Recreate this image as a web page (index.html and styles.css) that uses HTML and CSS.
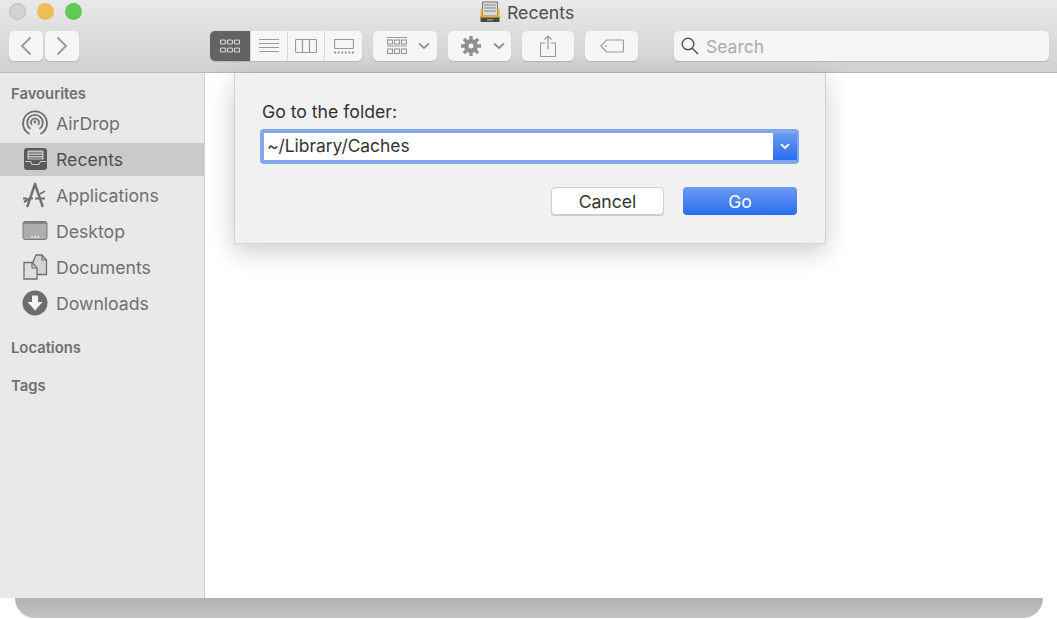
FILE: index.html
```html
<!DOCTYPE html>
<html lang="en">
<head>
    <meta charset="UTF-8">
    <title>Recents</title>
    <link rel="stylesheet" href="styles.css">
</head>
<body>
    <div class="window">
        <header class="toolbar">
            <div class="lights">
                <span class="light light-off"></span>
                <span class="light light-min"></span>
                <span class="light light-max"></span>
            </div>
            <div class="title">
                <svg class="title-icon" width="22" height="22" viewBox="0 0 22 22">
                    <rect x="3.500" y="1" width="15" height="14" fill="#d8d8d8" stroke="#777"/>
                    <path d="M5 4h12M5 7h12M5 10h12" stroke="#8a8a8a"/>
                    <path d="M2.500 8v7M19.500 8v7" stroke="#e9b52f" stroke-width="2"/>
                    <path d="M1.500 15h19v5a1 1 0 0 1-1 1h-17a1 1 0 0 1-1-1z" fill="#4a4a4a"/>
                    <rect x="1.500" y="14.500" width="19" height="2" fill="#e9b52f"/>
                    <rect x="8" y="18" width="6" height="1.500" fill="#999"/>
                </svg>
                <span>Recents</span>
            </div>
            <div class="tools">
                <div class="group nav-group">
                    <button class="tool nav-btn">
                        <svg width="12" height="20" viewBox="0 0 12 20"><path d="M10.500 1.500 2 10l8.500 8.500" class="line"/></svg>
                    </button>
                    <button class="tool nav-btn">
                        <svg width="12" height="20" viewBox="0 0 12 20"><path d="M1.500 1.500 10 10l-8.500 8.500" class="line"/></svg>
                    </button>
                </div>
                <div class="group views">
                    <button class="view view-on">
                        <svg width="20" height="14" viewBox="0 0 20 14" class="grid-on">
                            <rect x="0.500" y="1" width="5" height="4" rx="1"/><rect x="7.500" y="1" width="5" height="4" rx="1"/><rect x="14.500" y="1" width="5" height="4" rx="1"/>
                            <rect x="0.500" y="9" width="5" height="4" rx="1"/><rect x="7.500" y="9" width="5" height="4" rx="1"/><rect x="14.500" y="9" width="5" height="4" rx="1"/>
                        </svg>
                    </button>
                    <button class="view view-list">
                        <svg width="20" height="14" viewBox="0 0 20 14"><path d="M0 .5h20M0 4.500h20M0 8.500h20M0 12.500h20" class="thin"/></svg>
                    </button>
                    <button class="view view-cols">
                        <svg width="22" height="14" viewBox="0 0 22 14"><rect x=".5" y=".5" width="21" height="13" rx="1" class="thin"/><path d="M7.500 .5v13M14.500 .5v13" class="thin"/></svg>
                    </button>
                    <button class="view view-gallery">
                        <svg width="20" height="15" viewBox="0 0 20 15"><rect x=".5" y=".5" width="19" height="9" rx="1" class="thin"/><path d="M0 13.500h20" stroke="#9a9a9a" stroke-width="2" stroke-dasharray="2 1.600"/></svg>
                    </button>
                </div>
                <button class="tool arrange">
                    <svg width="20" height="18" viewBox="0 0 20 18">
                        <path d="M0 .5h20M0 9h20" class="thin"/>
                        <g class="thin"><rect x=".5" y="3" width="5" height="4"/><rect x="7.500" y="3" width="5" height="4"/><rect x="14.500" y="3" width="5" height="4"/>
                        <rect x=".5" y="12" width="5" height="4.500"/><rect x="7.500" y="12" width="5" height="4.500"/><rect x="14.500" y="12" width="5" height="4.500"/></g>
                    </svg>
                    <svg width="12" height="8" viewBox="0 0 12 8"><path d="M1 1.500 6 6l5-4.500" class="chev"/></svg>
                </button>
                <button class="tool action">
                    <svg width="20" height="20" viewBox="0 0 20 20">
                        <circle cx="10" cy="10" r="4.700" fill="none" stroke="#8f8f8f" stroke-width="4.400"/>
                        <path d="M10 0v4M10 16v4M0 10h4M16 10h4M2.900 2.900l2.900 2.900M14.200 14.200l2.900 2.900M2.900 17.100l2.900-2.900M14.200 5.800l2.900-2.900" stroke="#8f8f8f" stroke-width="3.400"/>
                    </svg>
                    <svg width="12" height="8" viewBox="0 0 12 8"><path d="M1 1.500 6 6l5-4.500" class="chev"/></svg>
                </button>
                <button class="tool share">
                    <svg width="16" height="22" viewBox="0 0 16 22"><path d="M5 8H.5v13.500h15V8H11M8 14V1M4.500 4.500 8 1l3.500 3.500" class="thin"/></svg>
                </button>
                <button class="tool tag">
                    <svg width="24" height="14" viewBox="0 0 24 14"><path d="M6.500 1H22a1.500 1.500 0 0 1 1.500 1.500v9A1.500 1.500 0 0 1 22 13H6.500L.8 7z" class="thin"/><circle cx="6" cy="7" r="1" fill="#9a9a9a"/></svg>
                </button>
                <label class="search">
                    <svg width="18" height="18" viewBox="0 0 18 18"><circle cx="7" cy="7" r="5.800" fill="none" stroke="#555" stroke-width="1.400"/><path d="m11.200 11.200 5.800 5.800" stroke="#555" stroke-width="1.500"/></svg>
                    <span>Search</span>
                </label>
            </div>
        </header>

        <div class="main">
            <aside class="sidebar">
                <h2 class="side-head side-head-fav">Favourites</h2>
                <a class="side-item">
                    <svg width="26" height="26" viewBox="0 0 26 26" class="side-icon">
                        <g fill="none" stroke="#6f6f6f">
                            <path d="M7.500 24a12 12 0 1 1 11 0" stroke-width="1.800"/>
                            <path d="M8.500 19a7.800 7.800 0 1 1 9 0" stroke-width="1.800"/>
                            <path d="M10 15a3.900 3.900 0 1 1 6 0" stroke-width="1.600"/>
                        </g>
                        <circle cx="13" cy="12" r="1.400" fill="#6f6f6f"/>
                    </svg>
                    AirDrop
                </a>
                <a class="side-item side-item-on">
                    <svg width="26" height="26" viewBox="0 0 26 26" class="side-icon">
                        <rect x="2" y="1" width="23" height="22" rx="3" fill="#5a5a5a"/>
                        <path d="M5.500 12.500V4.500a1 1 0 0 1 1-1h14a1 1 0 0 1 1 1v8z" fill="#c4c4c4"/>
                        <path d="M7 6h13M7 8.500h13M7 11h13" stroke="#5a5a5a" stroke-width="1.100"/>
                        <path d="M3 14.500h5.500l1.500 3h7l1.500-3H24" fill="none" stroke="#c4c4c4" stroke-width="1.200"/>
                    </svg>
                    Recents
                </a>
                <a class="side-item">
                    <svg width="26" height="26" viewBox="0 0 26 26" class="side-icon">
                        <g stroke="#6f6f6f" fill="none">
                            <path d="M13 2 5.500 24" stroke-width="2.400" stroke-linecap="round"/>
                            <path d="M13 2l7.500 22" stroke-width="2.400" stroke-linecap="round"/>
                            <path d="M1 16.500h24" stroke-width="1.800" stroke-dasharray="4 2"/>
                            <path d="M8.500 16 2 20" stroke-width="2.200"/>
                            <path d="m18 12 5-3" stroke-width="1.500"/>
                        </g>
                    </svg>
                    Applications
                </a>
                <a class="side-item">
                    <svg width="26" height="26" viewBox="0 0 26 26" class="side-icon">
                        <rect x="1" y="3.500" width="24" height="18" rx="2" fill="#aeaeae" stroke="#7a7a7a"/>
                        <rect x="1.500" y="4" width="23" height="2" fill="#858585"/>
                        <path d="M9 19h8" stroke="#eee" stroke-width="1.500" stroke-dasharray="2 1"/>
                    </svg>
                    Desktop
                </a>
                <a class="side-item">
                    <svg width="26" height="26" viewBox="0 0 26 26" class="side-icon">
                        <path d="M14 1h6l4.500 5v14.500H11V8z" fill="#d4d4d4" stroke="#6f6f6f" stroke-width="1.300"/>
                        <path d="M20 1v5h4.500" fill="none" stroke="#6f6f6f" stroke-width="1.200"/>
                        <path d="M2 8.500h8L15 14v11H2z" fill="#dedede" stroke="#6f6f6f" stroke-width="1.300"/>
                        <path d="M10 8.500V14h5" fill="none" stroke="#6f6f6f" stroke-width="1.200"/>
                    </svg>
                    Documents
                </a>
                <a class="side-item">
                    <svg width="26" height="26" viewBox="0 0 26 26" class="side-icon">
                        <circle cx="13" cy="13" r="12.500" fill="#6d6d6d"/>
                        <path d="M10 5.500h6V12h4.500L13 20.500 5.500 12H10z" fill="#f2f2f2"/>
                    </svg>
                    Downloads
                </a>
                <h2 class="side-head side-head-loc">Locations</h2>
                <h2 class="side-head side-head-tags">Tags</h2>
            </aside>
            <section class="content">
                <form class="sheet">
                    <label class="sheet-label">Go to the folder:</label>
                    <div class="combo">
                        <span class="combo-text">~/Library/Caches</span>
                        <span class="combo-arrow">
                            <svg width="10" height="7" viewBox="0 0 10 7"><path d="M1 1.200 5 5l4-3.800" fill="none" stroke="#fff" stroke-width="1.800"/></svg>
                        </span>
                    </div>
                    <div class="sheet-buttons">
                        <button type="button" class="btn btn-cancel">Cancel</button>
                        <button type="button" class="btn btn-go">Go</button>
                    </div>
                </form>
            </section>
        </div>
    </div>
    <div class="under-shadow"></div>
</body>
</html>
```

FILE: styles.css
```css
* {
    box-sizing: border-box;
}

html, body {
    margin: 0;
    height: 619px;
    overflow: hidden;
    background-color: #ffffff;
    font-family: Inter, "Liberation Sans", sans-serif;
}

.window {
    height: 598px;
    display: flex;
    flex-direction: column;
    border-bottom-left-radius: 3px;
    border-bottom-right-radius: 3px;
    overflow: hidden;
}

.toolbar {
    height: 73px;
    flex: none;
    background: linear-gradient(#e9e9e9, #d0d0d0);
    border-bottom: 1px solid #b8b8b8;
    display: flex;
    flex-direction: column;
    position: relative;
}

.lights {
    position: absolute;
    left: 9px;
    top: 3px;
    display: flex;
    gap: 11px;
}

.light {
    width: 17px;
    height: 17px;
    border-radius: 50%;
}

.light-off {
    background-color: #d2d2d2;
    border: 1px solid #bdbdbd;
}

.light-min {
    background-color: #f0bc55;
}

.light-max {
    background-color: #62c955;
}

.title {
    height: 31px;
    padding: 2px 0 0 479px;
    display: flex;
    gap: 6px;
    font-size: 17.700px;
    color: #4f4f4f;
    line-height: 22px;
}

.title-icon {
    flex: none;
    margin-top: -1px;
}

.tools {
    height: 30px;
    padding: 0 8px 0 9px;
    display: flex;
}

.tool, .view {
    border: 0;
    padding: 0;
    background-color: #f6f6f6;
    display: flex;
    align-items: center;
    justify-content: center;
}

.tool {
    height: 30px;
    border-radius: 5px;
    box-shadow: 0 1px 1px #b5b5b5;
}

.line {
    fill: none;
    stroke: #9c9c9c;
    stroke-width: 2;
}

.thin {
    fill: none;
    stroke: #9a9a9a;
    stroke-width: 1.200;
}

.chev {
    fill: none;
    stroke: #8f8f8f;
    stroke-width: 1.800;
}

.group {
    display: flex;
}

.nav-group {
    gap: 2px;
}

.nav-btn {
    width: 34px;
}

.views {
    margin-left: 131px;
    border-radius: 5px;
    overflow: hidden;
    box-shadow: 0 1px 1px #b5b5b5;
    gap: 1px;
    background-color: #d9d9d9;
}

.view {
    height: 30px;
}

.view-on {
    width: 40px;
    background-color: #636363;
}

.grid-on rect {
    fill: none;
    stroke: #d6d6d6;
    stroke-width: 1.200;
}

.view-list {
    width: 36px;
}

.view-cols {
    width: 36px;
}

.view-gallery {
    width: 37px;
}

.arrange {
    width: 64px;
    margin-left: 11px;
    padding-left: 6px;
    gap: 11px;
}

.action {
    width: 63px;
    margin-left: 11px;
    padding-left: 7px;
    gap: 12px;
}

.share {
    width: 52px;
    margin-left: 11px;
}

.tag {
    width: 53px;
    margin-left: 11px;
}

.search {
    width: 375px;
    height: 30px;
    margin-left: 36px;
    padding-left: 7px;
    border-radius: 5px;
    background-color: #f6f6f6;
    box-shadow: 0 1px 1px #b5b5b5;
    display: flex;
    align-items: center;
    gap: 7px;
    font-size: 17.500px;
    color: #ababab;
}

.main {
    flex: 1;
    display: flex;
    min-height: 0;
}

.sidebar {
    width: 205px;
    flex: none;
    background-color: #e9e9e9;
    border-right: 1px solid #d2d2d2;
    padding-top: 11px;
}

.side-head {
    margin: 0;
    padding-left: 11px;
    font-size: 14.800px;
    font-weight: 600;
    line-height: 20px;
    color: #707070;
}

.side-head-fav {
    margin-bottom: 1px;
}

.side-head-loc {
    margin-top: 17px;
}

.side-head-tags {
    margin-top: 18px;
}

.side-item {
    height: 36px;
    display: flex;
    align-items: center;
    gap: 8px;
    padding-left: 22px;
    font-size: 17.650px;
    color: #707070;
}

.side-item-on {
    background-color: #cacaca;
    background-clip: padding-box;
    border-top: 2px solid transparent;
    border-bottom: 1px solid transparent;
    color: #505050;
}

.side-icon {
    flex: none;
}

.content {
    flex: 1;
    background-color: #ffffff;
    position: relative;
}

.sheet {
    position: absolute;
    left: 29px;
    top: 0;
    width: 592px;
    height: 171px;
    padding: 28px 28px 0 27px;
    background-color: #f1f1f1;
    border: 1px solid #d2d2d2;
    border-top: 0;
    box-shadow: 0 8px 24px rgba(0, 0, 0, 0.2);
}

.sheet-label {
    display: block;
    font-size: 17.650px;
    line-height: 22px;
    color: #333333;
}

.combo {
    width: 539px;
    height: 35px;
    margin: 6px 0 0 -2px;
    display: flex;
    background-color: #ffffff;
    border: 4px solid #80a6ec;
    border-right-width: 2px;
    border-radius: 4px;
}

.combo-text {
    flex: 1;
    padding-left: 3px;
    font-size: 17.400px;
    line-height: 26px;
    color: #333333;
}

.combo-arrow {
    width: 24px;
    background: linear-gradient(#6a9bf1, #2b6ef0);
    display: flex;
    align-items: center;
    justify-content: center;
}

.sheet-buttons {
    margin-top: 23px;
    display: flex;
    justify-content: flex-end;
    gap: 19px;
}

.btn {
    height: 28px;
    border-radius: 4px;
    font-family: inherit;
    font-size: 17.600px;
    padding: 0;
}

.btn-cancel {
    width: 113px;
    background-color: #ffffff;
    border: 1px solid #d0d0d0;
    color: #333333;
    box-shadow: 0 1px 1px #c8c8c8;
}

.btn-go {
    width: 114px;
    background: linear-gradient(#6b9bf3, #2a6df0);
    border: 0;
    color: #ffffff;
}

.under-shadow {
    height: 20px;
    margin: 0 14px 0 15px;
    background: linear-gradient(#b2b2b2, #c2c2c2);
    border-radius: 0 0 30px 30px;
}
```
